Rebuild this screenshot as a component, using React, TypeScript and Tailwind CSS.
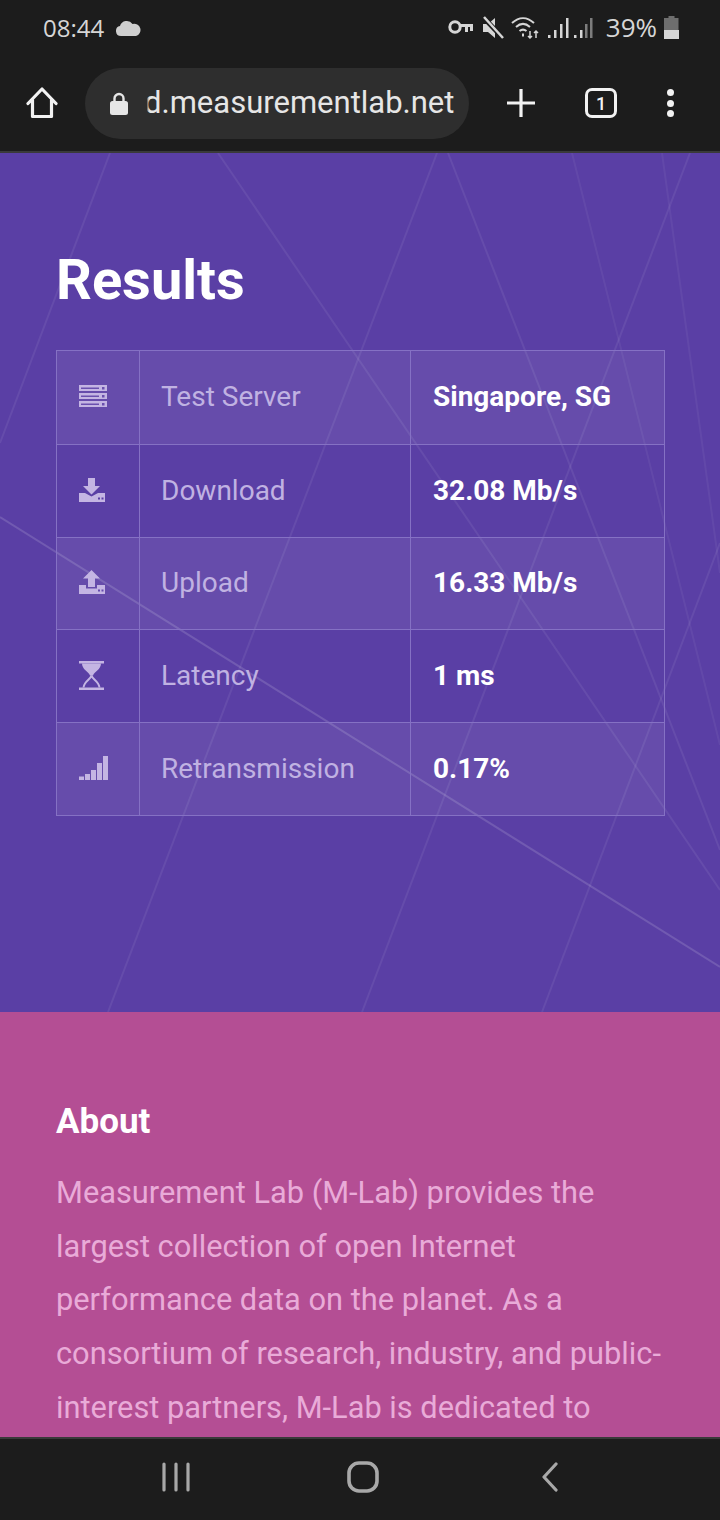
const rows = [
  { icon: "server", label: "Test Server", value: "Singapore, SG" },
  { icon: "download", label: "Download", value: "32.08 Mb/s" },
  { icon: "upload", label: "Upload", value: "16.33 Mb/s" },
  { icon: "latency", label: "Latency", value: "1 ms" },
  { icon: "signal", label: "Retransmission", value: "0.17%" },
];

function RowIcon({ name }: { name: string }) {
  if (name === "server") {
    return (
      <svg width="28" height="22" viewBox="0 0 28 22" fill="#c4b5e3">
        <path d="M0 0h28v6H0zM0 8h28v6H0zM0 16h28v6H0z" />
        <path d="M2 2.500h18v1.500H2zM2 10.500h18v1.500H2zM2 18.500h18v1.500H2z" fill="#6a50ae" />
        <path d="M23 2h2.500v2.500H23zM23 10h2.500v2.500H23zM23 18h2.500v2.500H23z" fill="#6a50ae" />
      </svg>
    );
  }
  if (name === "download") {
    return (
      <svg width="26" height="24" viewBox="0 0 26 24" fill="#c4b5e3">
        <path d="M9 0h7v8h5l-8.500 8.500L4 8h5z" />
        <path d="M0 15h6l6.500 3.500L19 15h7v9H0z" />
        <path d="M19 19.500h2v2h-2zM22.500 19.500h2v2h-2z" fill="#5a3fa5" />
      </svg>
    );
  }
  if (name === "upload") {
    return (
      <svg width="26" height="24" viewBox="0 0 26 24" fill="#c4b5e3">
        <path d="M12.500 0 21 8.500h-5V17H9V8.500H4z" />
        <path d="M0 15h7v3.500h11V15h8v9H0z" />
        <path d="M19 19.500h2v2h-2zM22.500 19.500h2v2h-2z" fill="#654bae" />
      </svg>
    );
  }
  if (name === "latency") {
    return (
      <svg width="25" height="29" viewBox="0 0 25 29" fill="#c4b5e3">
        <path d="M0 0h25v2.500H0zM0 26.500h25V29H0z" />
        <path d="M3 2.500h19c0 6-6.500 8-8 12h-3c-1.500-4-8-6-8-12z" />
        <path d="M12.500 14.500c-1 4-7.500 6-8 12M12.500 14.500c1 4 7.500 6 8 12" fill="none" stroke="#c4b5e3" strokeWidth="2" />
      </svg>
    );
  }
  return (
    <svg width="29" height="24" viewBox="0 0 29 24" fill="#c4b5e3">
      <path d="M0 20.500h5V24H0zM6 18h5v6H6zM12 14h5v10h-5zM18 7h5v17h-5zM24 0h5v24h-5z" />
    </svg>
  );
}

export default function App() {
  return (
    <div className="relative flex h-[1520px] w-[720px] flex-col overflow-hidden bg-[#1c1c1c] font-['Roboto',sans-serif]">
      {/* status bar */}
      <div className="flex h-[55px] shrink-0 items-center justify-between pl-[43px] pr-[41px] font-['Open_Sans',sans-serif] text-[24px] text-[#d6d6d6]">
        <div className="flex items-center">
          <span>08:44</span>
          <svg className="ml-[11px]" width="26" height="18" viewBox="0 0 26 18" fill="#cfcfcf">
            <path d="M6 17a5 5 0 0 1-1-9.900A7 7 0 0 1 17.500 5 5 5 0 0 1 21 17z" />
          </svg>
        </div>
        <div className="flex items-center">
          <svg width="26" height="17" viewBox="0 0 26 17" fill="none" stroke="#d6d6d6" strokeWidth="3">
            <circle cx="7" cy="8" r="5.200" />
            <path d="M12 6.500h13M18.500 7v6M23.500 7v5" />
          </svg>
          <svg className="ml-[8px]" width="22" height="24" viewBox="0 0 22 24" fill="#d6d6d6">
            <path d="M1 8h5l7-6v20l-7-6H1z" />
            <path d="M1 1l20 21" stroke="#1c1c1c" strokeWidth="5" />
            <path d="M2 1l19 21" stroke="#d6d6d6" strokeWidth="2.500" />
          </svg>
          <svg className="ml-[7px]" width="30" height="24" viewBox="0 0 30 24" fill="none" stroke="#d6d6d6" strokeWidth="2">
            <path d="M1 7c7-6.500 15-6.500 22 0M5 11c4.500-4 9.500-4 14 0M8.500 15c2.500-2 4.500-2 7 0" />
            <path d="M11 19h2" strokeWidth="3" />
            <path d="M19 15v7M17 20l2 2 2-2M25 22v-7M23 17l2-2 2 2" strokeWidth="1.500" />
          </svg>
          <svg className="ml-[7px]" width="45" height="24" viewBox="0 0 45 24" fill="#d6d6d6">
            <path d="M0 19h2.500v3H0zM6 14h2.500v8H6zM12 8h2.500v14H12zM18 2h2.500v20H18z" />
            <path d="M26 19h2.500v3H26zM32 14h2.500v8H32z" />
            <path d="M37 8h2.500v14H37zM42 2h2.500v20H42z" fill="#7c7c7c" />
          </svg>
          <span className="ml-[13px] text-[26px]">39%</span>
          <svg className="ml-[7px]" width="15" height="23" viewBox="0 0 15 23">
            <path d="M4.500 0h6v2h4v21H0V2h4.500z" fill="#6e6e6e" />
            <path d="M0 14h15v9H0z" fill="#d6d6d6" />
          </svg>
        </div>
      </div>

      {/* browser toolbar */}
      <div className="flex h-[98px] shrink-0 items-start border-b-2 border-[#3a3a3a] pl-[26px] pt-[13px]">
        <svg className="mt-[19px]" width="32" height="32" viewBox="0 0 32 32" fill="none" stroke="#f2f2f2" strokeWidth="3.200" strokeLinecap="round" strokeLinejoin="round">
          <path d="M2 16.500 16 2l14 14.500M6.500 13v16.500h19V13" />
        </svg>
        <div className="ml-[27px] flex h-[71px] w-[384px] items-center rounded-full bg-[#2e2e2e] pl-[25px]">
          <svg className="shrink-0" width="18" height="23" viewBox="0 0 18 23" fill="#e6e6e6">
            <path d="M4.500 10V6.500a4.500 4.500 0 0 1 9 0V10" fill="none" stroke="#e6e6e6" strokeWidth="2.400" />
            <rect x="0" y="9" width="18" height="14" rx="2.500" />
          </svg>
          <div className="relative ml-[16px] shrink-0">
            <span className="whitespace-nowrap text-[31px] text-[#e6e6e6]">d.measurementlab.net</span>
            {/* the omnibox fades the start of the scrolled url */}
            <div className="absolute inset-y-0 left-0 w-[5px] bg-gradient-to-r from-[#2e2e2e] from-50% to-transparent" />
          </div>
        </div>
        <svg className="ml-[32px] mt-[15px]" width="40" height="40" viewBox="0 0 40 40" fill="none" stroke="#f2f2f2" strokeWidth="3.200">
          <path d="M20 6v28M6 20h28" />
        </svg>
        <div className="ml-[44px] mt-[20px] flex h-[30px] w-[32px] items-center justify-center rounded-[7px] border-[3px] border-[#f2f2f2] text-[18px] font-medium text-[#f2f2f2]">
          1
        </div>
        <div className="ml-[50px] mt-[21px] flex flex-col gap-[3.5px]">
          <span className="size-[7px] rounded-full bg-[#f2f2f2]" />
          <span className="size-[7px] rounded-full bg-[#f2f2f2]" />
          <span className="size-[7px] rounded-full bg-[#f2f2f2]" />
        </div>
      </div>

      {/* results */}
      <div className="relative h-[859px] shrink-0 bg-[#5a3fa5] pl-[56px] pr-[55px] pt-[93px]">
        <svg className="absolute inset-0" width="720" height="859" fill="none" stroke="#ffffff" strokeOpacity="0.07" strokeWidth="2">
          <path d="M0 364 720 814" strokeOpacity="0.14" />
          <path d="M218 0 720 737" />
          <path d="M437 0 108 859" />
          <path d="M690 0 362 859" />
          <path d="M448 0 720 697" />
          <path d="M110 0 0 290" />
          <path d="M720 390 542 859" />
          <path d="M572 0 720 592" strokeOpacity="0.05" />
          <path d="M662 0 720 420" strokeOpacity="0.05" />
        </svg>
        <h1 className="relative text-[56px] font-bold leading-[68px] text-white">Results</h1>
        <div className="relative mt-[36px] border border-[#8571c4]">
          {rows.map((row, i) => (
            <div
              key={row.label}
              className={`grid h-[92.8px] grid-cols-[82px_271px_1fr] items-stretch border-[#8571c4] ${i > 0 ? "border-t" : ""} ${i % 2 === 0 ? "bg-white/[0.07]" : ""}`}
            >
              <div className="flex items-center pb-[2px] pl-[22px]">
                <RowIcon name={row.icon} />
              </div>
              <div className="flex items-center border-l border-[#8571c4] pl-[21px] text-[28px] text-[#c0b2e2]">{row.label}</div>
              <div className="flex items-center border-l border-[#8571c4] pl-[22px] text-[28px] font-bold text-white">{row.value}</div>
            </div>
          ))}
        </div>
      </div>

      {/* about */}
      <div className="h-[425px] shrink-0 bg-[#b44e94] px-[56px] pt-[87px]">
        <h2 className="text-[35px] font-bold leading-[46px] text-white">About</h2>
        <p className="mt-[21px] text-[30.8px] leading-[53.7px] text-[#e9abd8]">
          Measurement Lab (M-Lab) provides the largest collection of open Internet performance data on the planet. As a consortium of research, industry, and public-interest partners, M-Lab is dedicated to
        </p>
      </div>

      {/* android nav */}
      <div className="flex flex-1 items-center border-t-2 border-[#3a3a3a] bg-[#1c1c1c] pb-[5px]">
        <svg className="ml-[160px]" width="32" height="30" viewBox="0 0 32 30" fill="none" stroke="#a8a8a8" strokeWidth="3.200" strokeLinecap="round">
          <path d="M4 2v26M16 2v26M28 2v26" />
        </svg>
        <svg className="ml-[155px]" width="32" height="32" viewBox="0 0 32 32" fill="none" stroke="#a8a8a8" strokeWidth="3.600">
          <rect x="2" y="2" width="28" height="28" rx="10" />
        </svg>
        <svg className="ml-[161px]" width="20" height="30" viewBox="0 0 20 30" fill="none" stroke="#a8a8a8" strokeWidth="3.200" strokeLinecap="round" strokeLinejoin="round">
          <path d="M16 2 4 15l12 13" />
        </svg>
      </div>
    </div>
  );
}
